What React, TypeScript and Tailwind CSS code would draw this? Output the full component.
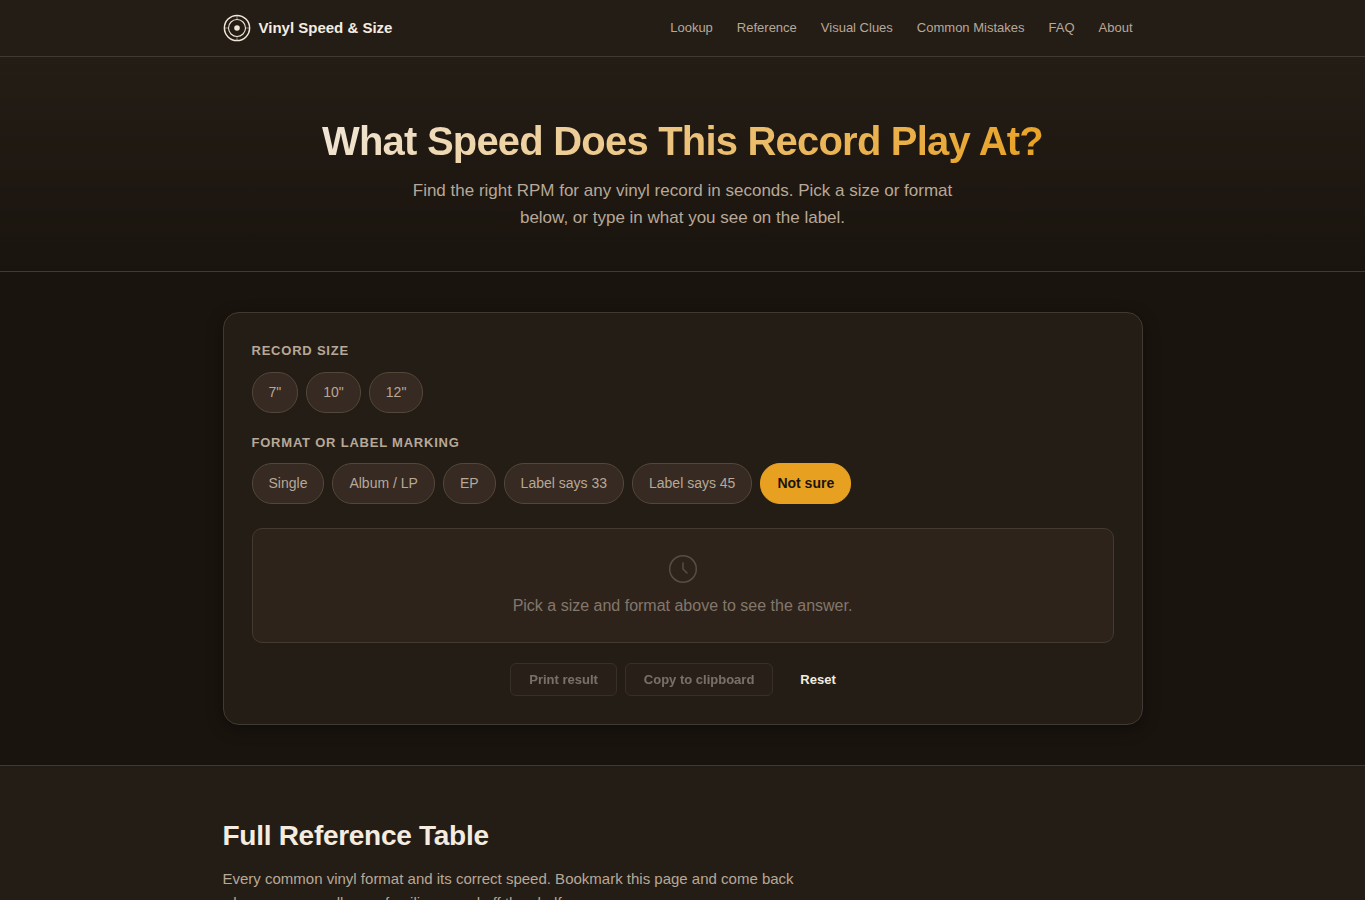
import React from 'react';

const NAV_LINKS = ['Lookup', 'Reference', 'Visual Clues', 'Common Mistakes', 'FAQ', 'About'];
const SIZES = ['7"', '10"', '12"'];
const FORMATS = ['Single', 'Album / LP', 'EP', 'Label says 33', 'Label says 45', 'Not sure'];

interface ChipGroupProps {
    label: string;
    options: string[];
    selected: string | null;
    onSelect: (val: string) => void;
}

const ChipGroup: React.FC<ChipGroupProps> = ({ label, options, selected, onSelect }) => (
    <div>
        <div className="text-[13px] leading-[20px] font-semibold uppercase tracking-[0.78px] text-[#b8a898]">{label}</div>
        <div className="mt-[10.8px] flex flex-wrap gap-2">
            {options.map(option => (
                <button
                    key={option}
                    onClick={() => onSelect(option)}
                    className={`
            h-[41px] rounded-[20px] border px-4 pb-[1.2px] text-[14px] leading-[22px]
            ${selected === option ? 'border-[#e8a020] bg-[#e8a020] font-semibold text-[#1a1410]' : 'border-[#524739] bg-[#362a22] text-[#b8a898]'}
          `}
                >
                    {option}
                </button>
            ))}
        </div>
    </div>
);

const Logo: React.FC = () => (
    <svg width="28" height="28" viewBox="0 0 28 28" fill="none" stroke="#f0e6d8">
        <circle cx="14" cy="14" r="12.6" strokeWidth="1.5" />
        <circle cx="14" cy="14" r="8.5" strokeWidth="1.1" />
        <circle cx="14" cy="14" r="2.8" fill="#f0e6d8" stroke="none" />
        <path d="M14 2v3M14 23v3M2 14h3M23 14h3" strokeWidth="1" opacity="0.5" />
    </svg>
);

const ClockIcon: React.FC = () => (
    <svg className="opacity-50" width="32" height="32" viewBox="0 0 32 32" fill="none" stroke="#83776b" strokeWidth="1.5" strokeLinecap="round">
        <circle cx="16" cy="16" r="13.3" />
        <path d="M16 10v6l4 4" />
    </svg>
);

export default function App() {
    const [size, setSize] = React.useState<string | null>(null);
    const [format, setFormat] = React.useState<string | null>('Not sure');

    const handleReset = () => {
        setSize(null);
        setFormat('Not sure');
    };

    return (
        <div className="h-[900px] overflow-hidden bg-[#1a140e] font-['Liberation_Sans',Arial,sans-serif] text-[#f5ece0]">
            {/* Header */}
            <header className="h-[57px] border-b border-[#3f3a32] bg-[#241d16]">
                <div className="mx-auto flex h-full w-[920px] items-center justify-between">
                    <div className="flex items-center gap-2 text-[15px] font-bold">
                        <Logo />
                        <span>Vinyl Speed &amp; Size</span>
                    </div>
                    <nav className="flex gap-6 pr-[10px] text-[13px] text-[#b8a898]">
                        {NAV_LINKS.map(link => <a key={link} href="#">{link}</a>)}
                    </nav>
                </div>
            </header>

            {/* Hero */}
            <section className="flex h-[215px] flex-col items-center border-b border-[#3f3a32] bg-linear-to-b/srgb from-[#241d16] to-[#1a140e] pt-[60px] text-center">
                <h1 className="bg-linear-135/srgb from-[#f0e6d8] to-[#e8a020] bg-clip-text text-[40px] leading-[48px] font-bold tracking-[-0.8px] text-transparent">
                    What Speed Does This Record Play At?
                </h1>
                <p className="mt-[12px] w-[560px] text-[17px] leading-[27.2px] text-[#b8a898]">
                    Find the right RPM for any vinyl record in seconds. Pick a size or format below, or type in what you see on the label.
                </p>
            </section>

            {/* Lookup */}
            <main className="h-[493px] pt-10">
                <div className="mx-auto h-[413px] w-[920px] rounded-2xl border border-[#3f3a32] bg-[#241d16] px-7 pt-7 shadow-[0_4px_16px_rgba(0,0,0,0.4)]">
                    <ChipGroup label="Record size" options={SIZES} selected={size} onSelect={setSize} />
                    <div className="mt-[19.8px]">
                        <ChipGroup label="Format or label marking" options={FORMATS} selected={format} onSelect={setFormat} />
                    </div>
                    <div className="mt-6 flex h-[115px] flex-col items-center rounded-[10px] border border-[#433a30] bg-[#2e231b] pt-6">
                        <ClockIcon />
                        <p className="mt-2 text-[16px] leading-[26px] text-[#83776b]">Pick a size and format above to see the answer.</p>
                    </div>
                    <div className="mt-5 flex justify-center gap-2 text-[13px] font-semibold">
                        <button className="h-[33px] rounded-md border border-[#564b41] bg-[#2e231f] px-[18px] text-[#f5ece0] opacity-40">Print result</button>
                        <button className="h-[33px] rounded-md border border-[#564b41] bg-[#2e231f] px-[18px] text-[#f5ece0] opacity-40">Copy to clipboard</button>
                        <button onClick={handleReset} className="h-[33px] rounded-md border border-transparent px-[18px]">Reset</button>
                    </div>
                </div>
            </main>

            {/* Reference table */}
            <section className="h-[300px] border-t border-[#3f3a32] bg-[#241d16] pt-12">
                <div className="mx-auto w-[920px]">
                    <h2 className="text-[28px] leading-[44px] font-bold tracking-[-0.28px]">Full Reference Table</h2>
                    <p className="mt-[9px] w-[600px] text-[15px] leading-[24px] text-[#b8a898]">
                        Every common vinyl format and its correct speed. Bookmark this page and come back whenever you pull an unfamiliar record off the shelf.
                    </p>
                </div>
            </section>
        </div>
    );
}
